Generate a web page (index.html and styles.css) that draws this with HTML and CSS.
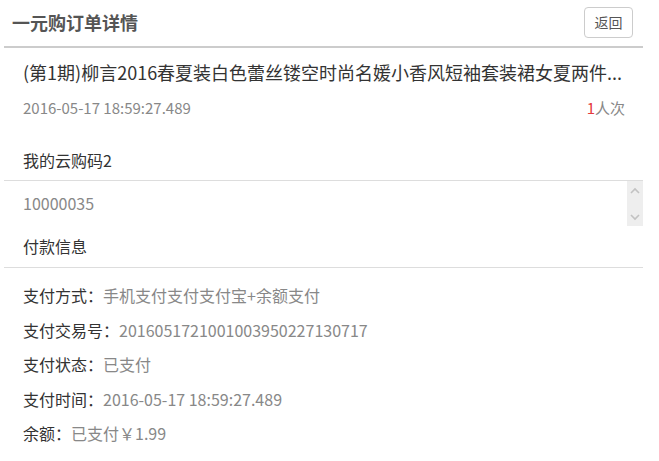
FILE: index.html
```html
<!DOCTYPE html>
<html lang="zh-CN">

<head>
    <meta charset="UTF-8">
    <title>一元购订单详情</title>
    <link rel="stylesheet" href="styles.css">
</head>

<body>
    <div class="page">
        <div class="header">
            <h1>一元购订单详情</h1>
            <button class="back-btn">返回</button>
        </div>

        <div class="product">
            <p class="product-name">(第1期)柳言2016春夏装白色蕾丝镂空时尚名媛小香风短袖套装裙女夏两件...</p>
            <div class="product-meta">
                <span class="time">2016-05-17 18:59:27.489</span>
                <span class="count"><em>1</em>人次</span>
            </div>
        </div>

        <h2 class="section-title">我的云购码2</h2>
        <div class="codes">
            <div class="codes-list">10000035</div>
            <div class="fake-scroll">
                <svg width="10" height="7" viewBox="0 0 10 7"><path d="M1 6 L5 2 L9 6" fill="none" stroke="#c2c2c2" stroke-width="1.6"/></svg>
                <svg width="10" height="7" viewBox="0 0 10 7"><path d="M1 1 L5 5 L9 1" fill="none" stroke="#c2c2c2" stroke-width="1.6"/></svg>
            </div>
        </div>

        <h2 class="section-title">付款信息</h2>
        <ul class="pay-info">
            <li>支付方式：<span>手机支付支付支付宝+余额支付</span></li>
            <li>支付交易号：<span>2016051721001003950227130717</span></li>
            <li>支付状态：<span>已支付</span></li>
            <li>支付时间：<span>2016-05-17 18:59:27.489</span></li>
            <li>余额：<span>已支付￥1.99</span></li>
        </ul>
    </div>
</body>

</html>
```

FILE: styles.css
```css
* {
    box-sizing: border-box;
}

body {
    margin: 0;
    font-family: "Noto Sans CJK SC", "Noto Sans", sans-serif;
    color: #333;
    background-color: #fff;
}

.page {
    width: 639px;
    margin: 0 4px;
}

.header {
    display: flex;
    justify-content: space-between;
    align-items: center;
    height: 48px;
    padding: 0 10px 2px 8px;
    border-bottom: 2px solid #ccc;
}

.header h1 {
    margin: 0;
    font-size: 18px;
    font-weight: bold;
    color: #555;
}

.back-btn {
    width: 49px;
    height: 31px;
    padding: 0;
    font-family: inherit;
    font-size: 14px;
    color: #555;
    background-color: #fff;
    border: 1px solid #ccc;
    border-radius: 4px;
}

.product {
    padding: 8px 18px 18px 19px;
}

.product-name {
    margin: 0;
    font-size: 18px;
    line-height: 32px;
    white-space: nowrap;
}

.product-meta {
    display: flex;
    justify-content: space-between;
    margin-top: 6px;
    font-size: 15px;
    line-height: 28px;
    color: #888;
}

.product-meta em {
    font-style: normal;
    color: #e4393c;
}

.section-title {
    margin: 0;
    padding: 0 19px;
    font-size: 16px;
    font-weight: normal;
    line-height: 40px;
    border-bottom: 1px solid #ddd;
}

.section-title:nth-of-type(2) {
    line-height: 41px;
}

.codes {
    display: flex;
    height: 45px;
}

.codes-list {
    flex: 1;
    padding: 0 19px;
    font-size: 16px;
    line-height: 45px;
    color: #888;
}

.fake-scroll {
    display: flex;
    flex-direction: column;
    justify-content: space-between;
    align-items: center;
    width: 16px;
    padding: 6px 0 5px;
    background-color: #eee;
}

.pay-info {
    margin: 0;
    padding: 10px 19px 0;
    list-style: none;
    font-size: 16px;
}

.pay-info li {
    line-height: 34.5px;
}

.pay-info span {
    color: #888;
}
```
